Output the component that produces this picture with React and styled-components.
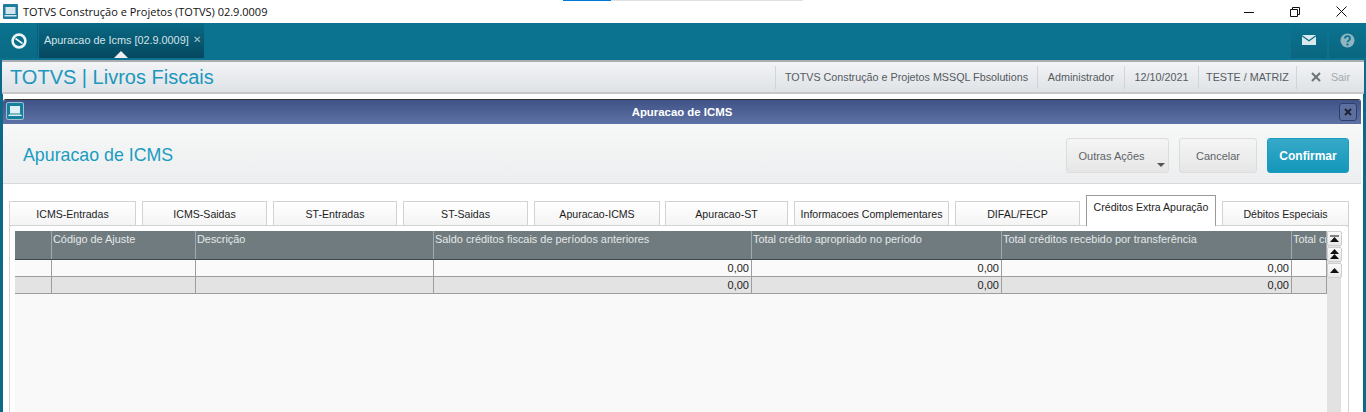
import React from "react";
import styled, { createGlobalStyle } from "styled-components";

const GlobalStyle = createGlobalStyle`
  html, body { margin: 0; padding: 0; height: 100%; overflow: hidden; background: #fff; }
  * { box-sizing: border-box; }
  body { font-family: "Liberation Sans", Arial, sans-serif; }
`;

const Page = styled.div`
  height: 412px;
  width: 1366px;
  display: flex;
  flex-direction: column;
  overflow: hidden;
`;

// Windows title bar
const TitleBar = styled.div`
  position: relative;
  height: 23px;
  flex: none;
  display: flex;
  align-items: center;
  padding-left: 3px;
  background: #fff;
`;

const TitleText = styled.span`
  margin-left: 5px;
  font-family: "Open Sans", sans-serif;
  font-size: 11px;
  color: #111;
`;

const WindowControls = styled.div`
  margin-left: auto;
  padding-right: 1px;
  display: flex;
`;

const WindowButton = styled.div`
  width: 46px;
  height: 23px;
  display: flex;
  align-items: center;
  justify-content: center;
  padding-right: 2px;
`;

const OtherWindowEdge = styled.div`
  position: absolute;
  top: 0;
  left: 563px;
  width: 240px;
  height: 1px;
  background: linear-gradient(to right, #0078d7 0 48px, #e1e1e1 48px);
`;

// Teal navigation bar
const NavBar = styled.div`
  height: 37px;
  flex: none;
  display: flex;
  background: #0b7390;
  padding-bottom: 2px;
`;

const NavLogo = styled.div`
  width: 38px;
  display: flex;
  align-items: center;
  justify-content: center;
  padding-top: 1px;
  background: linear-gradient(#0b7390, #0a6a85);
  border-right: 1px solid #0a6078;
`;

const NavTab = styled.div`
  position: relative;
  width: 165px;
  margin-left: 1px;
  padding: 11px 0 0 5px;
  background: linear-gradient(#0a6a85, #05485f);
  color: #d4e3e8;
  font-size: 10.85px;
  white-space: nowrap;
`;

const NavClose = styled.span`
  margin-left: 4px;
  font-size: 10px;
  color: #a9c4cd;
  position: relative;
  top: -1px;
`;

const NavPointer = styled.div`
  position: absolute;
  left: 75px;
  bottom: 0;
  width: 0;
  height: 0;
  border-left: 7px solid transparent;
  border-right: 7px solid transparent;
  border-bottom: 7px solid #eef0f2;
`;

const NavRight = styled.div`
  margin-left: auto;
  display: flex;
`;

const NavIconButton = styled.div`
  width: ${(p) => p.$w}px;
  margin-left: 2px;
  display: flex;
  align-items: center;
  justify-content: center;
  padding-bottom: 1px;
  background: linear-gradient(#0b7390, #0a6680);
`;

// Everything under the nav bar
const Workspace = styled.div`
  flex: 1;
  min-height: 0;
  display: flex;
  flex-direction: column;
  background: #fff;
  border-left: 3px solid #0b6a88;
  border-right: 3px solid #0b6a88;
`;

const AppHeader = styled.div`
  height: 34px;
  flex: none;
  display: flex;
  align-items: center;
  background: linear-gradient(#f2f4f6, #dfe2e6);
  border-top: 2px solid #a9aeb2;
  border-bottom: 2px solid #c8c8c8;
  margin-left: -1px;
  margin-right: -1px;
  padding-left: 8px;
`;

const AppTitle = styled.h1`
  margin: 0;
  font-weight: 400;
  font-size: 20px;
  color: #1c97bd;
`;

const InfoList = styled.div`
  margin-left: auto;
  display: flex;
  align-items: center;
  font-size: 10.75px;
  color: #555b60;
`;

const InfoItem = styled.div`
  height: 23px;
  display: flex;
  align-items: center;
  justify-content: center;
  gap: 10px;
  width: ${(p) => p.$w}px;
  border-left: 1px solid #d2d5d8;
`;

const LogoutText = styled.span`
  color: #a2a8ac;
`;

// Dialog
const Dialog = styled.div`
  flex: 1;
  min-height: 0;
  display: flex;
  flex-direction: column;
  margin: 5px 2px 0 0;
  border-top: 1px solid #333;
  border-radius: 3px 3px 0 0;
  overflow: hidden;
`;

const DialogBar = styled.div`
  position: relative;
  height: 24px;
  flex: none;
  display: flex;
  align-items: center;
  justify-content: center;
  background: linear-gradient(#3f5388, #5f72a5);
  color: #fff;
  font-size: 11.4px;
  font-weight: 700;
`;

const DialogIcon = styled.div`
  position: absolute;
  left: 3px;
  top: 2px;
  width: 18px;
  height: 18px;
  border-radius: 2px;
  border: 1px solid #9fc0d0;
  background: #16809f;
  display: flex;
  align-items: center;
  justify-content: center;
`;

const DialogClose = styled.div`
  position: absolute;
  right: 4px;
  top: 3px;
  width: 18px;
  height: 18px;
  border-radius: 3px;
  border: 1px solid #2f3f6c;
  background: #5d6f9f;
  display: flex;
  align-items: center;
  justify-content: center;
`;

const DialogHeader = styled.div`
  height: 60px;
  flex: none;
  display: flex;
  align-items: center;
  padding: 4px 12px 0 20px;
  background: linear-gradient(#f7f8f8, #eceeef);
  border-bottom: 1px solid #d9d9d9;
`;

const DialogTitle = styled.h2`
  margin: 0 auto 0 0;
  font-weight: 400;
  font-size: 17.8px;
  color: #1a9cc0;
`;

const HeaderButton = styled.button`
  position: relative;
  height: 35px;
  width: ${(p) => p.$w}px;
  margin-left: 10px;
  border-radius: 3px;
  font-family: "Liberation Sans", Arial, sans-serif;
  font-size: ${(p) => (p.$primary ? 12 : 11)}px;
  border: 1px solid ${(p) => (p.$primary ? "#1a9cc0" : "#dcdcdc")};
  background: ${(p) =>
    p.$primary
      ? "linear-gradient(#37a9c9, #1397ba)"
      : "linear-gradient(#f5f5f5, #e6e6e6)"};
  color: ${(p) => (p.$primary ? "#fff" : "#5e6468")};
  font-weight: ${(p) => (p.$primary ? 700 : 400)};
  padding: 0 ${(p) => p.$inset || 0}px 0 0;
`;

const Caret = styled.span`
  position: absolute;
  right: 3px;
  bottom: 5px;
  width: 0;
  height: 0;
  border-left: 4px solid transparent;
  border-right: 4px solid transparent;
  border-top: 4px solid #555;
`;

const DialogBody = styled.div`
  flex: 1;
  min-height: 0;
  display: flex;
  flex-direction: column;
  background: #fff;
  padding: 11px 12px 0 6px;
`;

const TabStrip = styled.div`
  height: 31px;
  flex: none;
  display: flex;
  align-items: flex-end;
`;

const Tab = styled.div`
  width: ${(p) => p.$w}px;
  margin-right: ${(p) => p.$gap}px;
  height: ${(p) => (p.$active ? 31 : 25)}px;
  display: flex;
  align-items: center;
  justify-content: center;
  padding-bottom: ${(p) => (p.$active ? 8 : 0)}px;
  font-size: 10.6px;
  color: #1d1d1d;
  white-space: nowrap;
  background: ${(p) => (p.$active ? "#fff" : "linear-gradient(#fff, #f4f4f4)")};
  border: 1px solid ${(p) => (p.$active ? "#9a9a9a" : "#d2d2d2")};
  border-bottom: ${(p) => (p.$active ? "none" : "1px solid #d2d2d2")};
  position: relative;
  z-index: ${(p) => (p.$active ? 1 : 0)};
`;

const TabPanel = styled.div`
  flex: 1;
  min-height: 0;
  display: flex;
  margin-top: -1px;
  padding: 5px 7px 0 5px;
  border: 1px solid #d4d4d4;
  border-bottom: none;
  border-radius: 3px 3px 0 0;
`;

const GridArea = styled.div`
  flex: 1;
  min-width: 0;
  overflow: hidden;
  background: #f9f9f9;
`;

const GridRow = styled.div`
  display: flex;
  width: 1312px;
  height: ${(p) => p.$h}px;
  background: ${(p) => p.$bg};
  border-bottom: 1px solid ${(p) => p.$line};
`;

const HeaderCell = styled.div`
  width: ${(p) => p.$w}px;
  flex: none;
  padding: 2px 0 0 1px;
  font-size: 10.9px;
  color: #e4e8e9;
  white-space: nowrap;
  overflow: hidden;
  border-right: 1px solid #a3a9ac;
`;

const BodyCell = styled.div`
  width: ${(p) => p.$w}px;
  flex: none;
  padding: 0 2px 0 0;
  font-size: 11px;
  line-height: 16px;
  text-align: right;
  color: #222;
  border-right: 1px solid #9d9d9d;
`;

const Scrollbar = styled.div`
  width: 14px;
  flex: none;
  display: flex;
  flex-direction: column;
  align-items: flex-start;
  background: #e2e2e2;
`;

const ScrollButton = styled.div`
  width: 15px;
  height: 15px;
  margin-bottom: 1px;
  flex: none;
  display: flex;
  align-items: center;
  justify-content: center;
  background: linear-gradient(#fafafa, #e8e8e8);
  border: 1px solid #cfcfcf;
  border-radius: 2px;
`;

const columns = [
  { w: 37, label: "" },
  { w: 144, label: "Código de Ajuste" },
  { w: 238, label: "Descrição" },
  { w: 318, label: "Saldo créditos fiscais de períodos anteriores", money: true },
  { w: 250, label: "Total crédito apropriado no período", money: true },
  { w: 290, label: "Total créditos recebido por transferência", money: true },
  { w: 35, label: "Total créditos recebidos" },
];

const tabs = [
  { label: "ICMS-Entradas", w: 127, gap: 6 },
  { label: "ICMS-Saidas", w: 125, gap: 6 },
  { label: "ST-Entradas", w: 124, gap: 6 },
  { label: "ST-Saidas", w: 125, gap: 6 },
  { label: "Apuracao-ICMS", w: 126, gap: 5 },
  { label: "Apuracao-ST", w: 123, gap: 6 },
  { label: "Informacoes Complementares", w: 155, gap: 6 },
  { label: "DIFAL/FECP", w: 125, gap: 6 },
  { label: "Créditos Extra Apuração", w: 130, gap: 6, active: true },
  { label: "Débitos Especiais", w: 127, gap: 0 },
];

const infos = [
  { label: "TOTVS Construção e Projetos MSSQL Fbsolutions", w: 262 },
  { label: "Administrador", w: 87 },
  { label: "12/10/2021", w: 74 },
  { label: "TESTE / MATRIZ", w: 98 },
];

const App = () => {
  return (
    <Page>
      <GlobalStyle />
      <TitleBar>
        <OtherWindowEdge />
        <svg width="15" height="15" viewBox="0 0 15 15">
          <rect width="15" height="15" rx="1" fill="#1f7d9e" />
          <rect x="2.5" y="3" width="10" height="7" fill="#d5e8ef" />
          <rect x="1.5" y="11" width="12" height="1.5" fill="#d5e8ef" />
        </svg>
        <TitleText>TOTVS Construção e Projetos (TOTVS) 02.9.0009</TitleText>
        <WindowControls>
          <WindowButton>
            <svg width="10" height="10" viewBox="0 0 10 10">
              <path d="M0 5.5h10" stroke="#111" fill="none" />
            </svg>
          </WindowButton>
          <WindowButton>
            <svg width="10" height="10" viewBox="0 0 10 10">
              <path d="M.5 2.5h7v7h-7zM2.5 2.5v-2h7v7h-2" stroke="#111" fill="none" />
            </svg>
          </WindowButton>
          <WindowButton>
            <svg width="11" height="11" viewBox="0 0 11 11">
              <path d="M.5.5l10 10M10.5.5l-10 10" stroke="#111" fill="none" />
            </svg>
          </WindowButton>
        </WindowControls>
      </TitleBar>

      <NavBar>
        <NavLogo>
          <svg width="16" height="16" viewBox="0 0 16 16">
            <circle cx="8" cy="8" r="6.4" fill="none" stroke="#eef5f7" strokeWidth="2.6" />
            <path d="M4.5 5.500l7 5" stroke="#eef5f7" strokeWidth="1.6" />
          </svg>
        </NavLogo>
        <NavTab>
          Apuracao de Icms [02.9.0009]
          <NavClose>✕</NavClose>
          <NavPointer />
        </NavTab>
        <NavRight>
          <NavIconButton $w={36}>
            <svg width="14" height="10" viewBox="0 0 14 10">
              <path d="M0 0h14L7 5z" fill="#d9e9ee" />
              <path d="M0 1.500V10h14V1.500L7 6.500z" fill="#d9e9ee" />
            </svg>
          </NavIconButton>
          <NavIconButton $w={37}>
            <svg width="15" height="15" viewBox="0 0 15 15">
              <circle cx="7.5" cy="7.5" r="7" fill="#8fb5c1" />
              <path d="M5 5.600c0-3.200 5-3.200 5 0 0 2-2.500 1.800-2.500 3.600" fill="none" stroke="#0b7390" strokeWidth="1.800" />
              <rect x="6.500" y="10.500" width="2" height="2" fill="#0b7390" />
            </svg>
          </NavIconButton>
        </NavRight>
      </NavBar>

      <Workspace>
        <AppHeader>
          <AppTitle>TOTVS | Livros Fiscais</AppTitle>
          <InfoList>
            {infos.map((item) => (
              <InfoItem key={item.label} $w={item.w}>
                {item.label}
              </InfoItem>
            ))}
            <InfoItem $w={68}>
              <svg width="10" height="10" viewBox="0 0 10 10">
                <path d="M1 1l8 8M9 1l-8 8" stroke="#6d7479" strokeWidth="2" />
              </svg>
              <LogoutText>Sair</LogoutText>
            </InfoItem>
          </InfoList>
        </AppHeader>

        <Dialog>
          <DialogBar>
            <DialogIcon>
              <svg width="14" height="14" viewBox="0 0 14 14">
                <rect x="2" y="2" width="10" height="7.500" fill="#dff1f6" />
                <path d="M1 10.500h12l1 1.500H0z" fill="#dff1f6" />
              </svg>
            </DialogIcon>
            Apuracao de ICMS
            <DialogClose>
              <svg width="8" height="8" viewBox="0 0 8 8">
                <path d="M1 1l6 6M7 1L1 7" stroke="#1c2333" strokeWidth="2" />
              </svg>
            </DialogClose>
          </DialogBar>

          <DialogHeader>
            <DialogTitle>Apuracao de ICMS</DialogTitle>
            <HeaderButton $w={103} $inset={12}>
              Outras Ações
              <Caret />
            </HeaderButton>
            <HeaderButton $w={78}>Cancelar</HeaderButton>
            <HeaderButton $w={82} $primary>
              Confirmar
            </HeaderButton>
          </DialogHeader>

          <DialogBody>
            <TabStrip>
              {tabs.map((tab) => (
                <Tab key={tab.label} $w={tab.w} $gap={tab.gap} $active={tab.active}>
                  {tab.label}
                </Tab>
              ))}
            </TabStrip>
            <TabPanel>
              <GridArea>
                <GridRow $h={29} $bg="#6f7b7e" $line="#3f4749">
                  {columns.map((col) => (
                    <HeaderCell key={col.label} $w={col.w}>
                      {col.label}
                    </HeaderCell>
                  ))}
                </GridRow>
                {["#fafafa", "#e3e3e3"].map((bg) => (
                  <GridRow key={bg} $h={17} $bg={bg} $line="#9d9d9d">
                    {columns.map((col) => (
                      <BodyCell key={col.label} $w={col.w}>
                        {col.money ? "0,00" : ""}
                      </BodyCell>
                    ))}
                  </GridRow>
                ))}
              </GridArea>
              <Scrollbar>
                <ScrollButton>
                  <svg width="11" height="10" viewBox="0 0 11 10">
                    <path d="M1 1.500h9v1H1zM5.500 3L10 8H1z" fill="#111" />
                  </svg>
                </ScrollButton>
                <ScrollButton>
                  <svg width="11" height="11" viewBox="0 0 11 11">
                    <path d="M5.500 0L10 5H1zM5.500 5L10 10H1z" fill="#111" />
                  </svg>
                </ScrollButton>
                <ScrollButton>
                  <svg width="9" height="6" viewBox="0 0 9 6">
                    <path d="M4.500 0L9 5H0z" fill="#111" />
                  </svg>
                </ScrollButton>
              </Scrollbar>
            </TabPanel>
          </DialogBody>
        </Dialog>
      </Workspace>
    </Page>
  );
};

export default App;
